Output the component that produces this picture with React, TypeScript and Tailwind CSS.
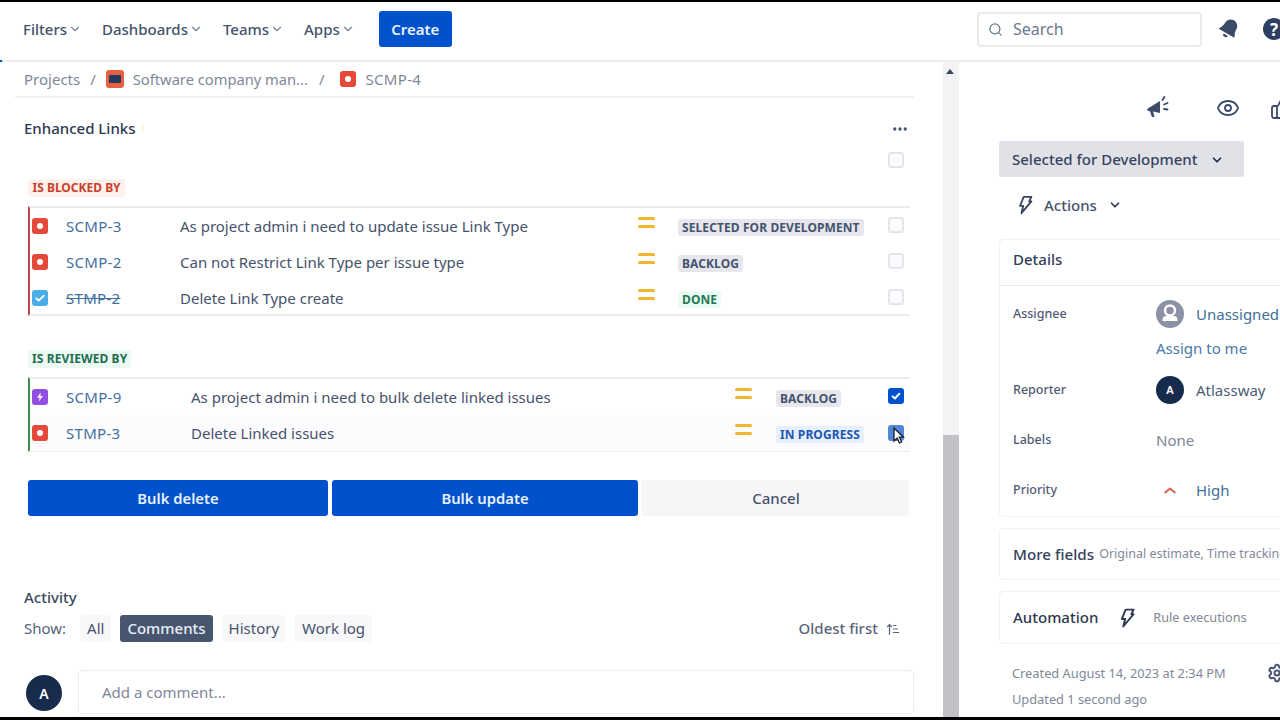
import { ChevronDown, Eye, Search, ThumbsUp, Settings, MoreHorizontal } from "lucide-react";

function Story() {
  return (
    <span className="flex h-4 w-4 items-center justify-center rounded-[3px] bg-[#e5493a]">
      <span className="h-[6px] w-[6px] rounded-full bg-white" />
    </span>
  );
}

function TaskIcon() {
  return (
    <span className="flex h-4 w-4 items-center justify-center rounded-[3px] bg-[#4bade8]">
      <svg viewBox="0 0 16 16" className="h-3 w-3" fill="none" stroke="white" strokeWidth="2.4" strokeLinecap="round" strokeLinejoin="round"><path d="M3 8.5l3.2 3L13 5" /></svg>
    </span>
  );
}

function EpicIcon() {
  return (
    <span className="flex h-4 w-4 items-center justify-center rounded-[3px] bg-[#904ee2]">
      <svg viewBox="0 0 16 16" className="h-3 w-3" fill="white"><path d="M9 2L4 9h3.4L6.6 14 12 6.8H8.4z" /></svg>
    </span>
  );
}

function Bolt({ className }: { className: string }) {
  return (
    <svg viewBox="0 0 16 22" className={className} fill="none" stroke="currentColor" strokeWidth="2" strokeLinejoin="round">
      <path d="M6 2h8.500l-2.500 5h2.500L3.500 20l2-8H2z" />
    </svg>
  );
}

function Check({ on, soft }: { on?: boolean; soft?: boolean }) {
  if (soft) return <span className="block h-4 w-4 rounded-[3px] bg-[#4f86d9]" />;
  return on ? (
    <span className="flex h-4 w-4 items-center justify-center rounded-[3px] bg-[#0052cc]">
      <svg viewBox="0 0 16 16" className="h-3 w-3" fill="none" stroke="white" strokeWidth="2.6" strokeLinecap="round" strokeLinejoin="round"><path d="M3.5 8.5l3 2.8L12.5 5" /></svg>
    </span>
  ) : (
    <span className="block h-4 w-4 rounded-[3px] border-2 border-[#e4e5ea] bg-[#fafbfc]" />
  );
}

function Priority() {
  return (
    <span className="-mt-[7px] flex w-[17px] flex-col gap-[5px]">
      <span className="h-[3px] rounded-full bg-[#f3b42f]" />
      <span className="h-[3px] rounded-full bg-[#f3b42f]" />
    </span>
  );
}

function Lozenge({ text, cls }: { text: string; cls: string }) {
  return <span className={`rounded-[3px] px-1 text-[12px] font-bold leading-[18px] tracking-[0.1px] ${cls}`}>{text}</span>;
}

const GREY = "bg-[#e6e6ec] text-[#44546f]";

function Row({ cols, icon, id, done, summary, status, cls, on, soft, hover, children }: {
  cols: string; icon: React.ReactNode; id: string; done?: boolean; summary: string; status: string; cls: string; on?: boolean; soft?: boolean; hover?: boolean; children?: React.ReactNode;
}) {
  return (
    <div className={`relative grid h-9 items-center ${cols} ${hover ? "bg-[#fcfbfe]" : ""}`}>
      <span className="pl-[2px]">{icon}</span>
      <span className={`text-[15px] tracking-[0.3px] text-[#44709f] ${done ? "line-through" : ""}`}>{id}</span>
      <span className="whitespace-nowrap text-[15px] text-[#46526c]">{summary}</span>
      <Priority />
      <span className="justify-self-start"><Lozenge text={status} cls={cls} /></span>
      <span className={soft ? "" : "-mt-[2px]"}><Check on={on} soft={soft} /></span>
      {children}
    </div>
  );
}

function NavItem({ label, className = "" }: { label: string; className?: string }) {
  return (
    <span className={`flex items-center gap-[1px] text-[15px] font-medium text-[#44526c] ${className}`}>
      {label}
      <ChevronDown className="h-[14px] w-[14px] text-[#7a8499]" strokeWidth={2} />
    </span>
  );
}

function DetailRow({ label, children, className = "" }: { label: string; children: React.ReactNode; className?: string }) {
  return (
    <div className={`flex items-center ${className}`}>
      <span className="w-[143px] text-[12.5px] font-medium text-[#4f5b73]">{label}</span>
      {children}
    </div>
  );
}

function Tab({ label, on }: { label: string; on?: boolean }) {
  return (
    <span className={`flex h-[27px] items-center rounded-[3px] px-[7px] text-[15px] ${on ? "bg-[#47556f] font-medium text-[#e9eef7]" : "bg-[#f8f8fb] text-[#46526c]"}`}>{label}</span>
  );
}

export default function App() {
  return (
    <div className="flex h-[720px] w-[1280px] flex-col overflow-hidden bg-white font-['Noto_Sans','Open_Sans',sans-serif]">
      <div className="h-[2px] shrink-0 bg-black" />

      <header className="relative flex h-[60px] shrink-0 items-center border-b-2 border-[#ebecf2] pb-[4px] pl-[23px]">
        <NavItem label="Filters" className="mr-[20px]" />
        <NavItem label="Dashboards" className="mr-[20px]" />
        <NavItem label="Teams" className="mr-[20px]" />
        <NavItem label="Apps" className="mr-[24px]" />
        <span className="flex h-9 w-[73px] items-center justify-center rounded-[3px] bg-[#0052cc] text-[15px] font-semibold text-[#e8f0fb]">Create</span>
        <div className="-mr-[5px] ml-auto flex items-center">
          <div className="flex h-[35px] w-[225px] items-center gap-[10px] rounded-[4px] border-2 border-[#e9eaee] pl-[9px] text-[16px] text-[#6b778c]">
            <Search className="h-[15px] w-[15px] text-[#6b778c]" strokeWidth={2} />
            Search
          </div>
          <svg viewBox="0 0 24 24" className="ml-[15px] h-[24px] w-[24px] rotate-[30deg] fill-[#3a4a68]">
            <path d="M12 2a6.500 6.500 0 0 0-6.500 6.500c0 5-2.500 7-2.500 8.500h18c0-1.500-2.500-3.500-2.500-8.500A6.500 6.500 0 0 0 12 2zM9.500 18.500a2.500 2.500 0 0 0 5 0z" />
          </svg>
          <span className="ml-[22px] flex h-[22px] w-[22px] shrink-0 items-center justify-center rounded-full bg-[#2e3f63] text-[17px] font-bold leading-none text-white">?</span>
        </div>
        <span className="absolute -bottom-[2px] left-0 h-[2px] w-[2px] bg-[#0052cc]" />
      </header>

      <main className="flex min-h-0 flex-1">
        <section className="w-[943px] shrink-0 overflow-hidden">
          <div className="ml-[15px] flex h-[36px] w-[899px] items-center border-b-2 border-[#f0f1f4] pl-[9px] text-[15px] text-[#7f8899]">
            <span>Projects</span>
            <span className="mx-[10px]">/</span>
            <span className="mr-[9px] flex h-[18px] w-[18px] items-center justify-center rounded-[3px] bg-[#e8603f]">
              <span className="h-[8px] w-[12px] rounded-[1px] bg-[#223a5e]" />
            </span>
            <span className="text-[14.7px]">Software company man...</span>
            <span className="ml-[11px] mr-[15px]">/</span>
            <span className="mr-[10px]"><Story /></span>
            <span className="tracking-[0.3px]">SCMP-4</span>
          </div>

          <div className="ml-[24px] flex h-[60px] w-[885px] items-center justify-between pt-[1px]">
            <span className="flex items-center text-[15px] font-medium text-[#2d3850]">
              Enhanced Links
              <span className="ml-[7px] h-[7px] w-[2px] bg-[#fdf3d8]" />
            </span>
            <MoreHorizontal className="h-[18px] w-[18px] text-[#44526c]" strokeWidth={2.5} />
          </div>

          <div className="ml-[888px] -mt-[6px] h-4 w-4"><Check /></div>

          <div className="ml-[28px] mt-[7px] flex h-[26px] items-center">
            <span className="rounded-[3px] bg-[#fdf0ed] py-0 pl-[4.5px] pr-1 text-[12px] font-bold leading-[18px] text-[#c9412a]">IS BLOCKED BY</span>
          </div>

          <div className="ml-[28px] mt-[5px] h-[110px] w-[882px] border-y-2 border-l-2 border-y-[#ebecf0] border-l-[#c0434a]">
            <Row cols="grid-cols-[36px_114px_458px_40px_210px_16px]" icon={<Story />} id="SCMP-3" summary="As project admin i need to update issue Link Type" status="SELECTED FOR DEVELOPMENT" cls={GREY} />
            <Row cols="grid-cols-[36px_114px_458px_40px_210px_16px]" icon={<Story />} id="SCMP-2" summary="Can not Restrict Link Type per issue type" status="BACKLOG" cls={GREY} />
            <Row cols="grid-cols-[36px_114px_458px_40px_210px_16px]" icon={<TaskIcon />} id="STMP-2" done summary="Delete Link Type create" status="DONE" cls="bg-[#eafbf3] text-[#1f7a55]" />
          </div>

          <div className="ml-[28px] mt-[30px] flex h-[26px] items-center">
            <span className="rounded-[3px] bg-[#ecf9f3] px-1 text-[12px] font-bold leading-[18px] tracking-[0.1px] text-[#1c6f50]">IS REVIEWED BY</span>
          </div>

          <div className="ml-[28px] mt-[5px] h-[75px] w-[882px] border-y-2 border-l-2 border-y-[#ebecf0] border-l-[#3f8a4c]">
            <Row cols="grid-cols-[36px_125px_544px_41px_112px_16px]" icon={<EpicIcon />} id="SCMP-9" summary="As project admin i need to bulk delete linked issues" status="BACKLOG" cls={GREY} on />
            <Row cols="grid-cols-[36px_125px_544px_41px_112px_16px]" icon={<Story />} id="STMP-3" summary="Delete Linked issues" status="IN PROGRESS" cls="bg-[#e6f0fd] text-[#1f56b3]" soft hover>
              <svg viewBox="0 0 12 18" className="absolute left-[863px] top-[12px] h-[18px] w-3">
                <path d="M1 1v13l3.200-3 2.200 5 2.200-1-2.200-4.800H10.500z" fill="#fff" stroke="#1c1c22" strokeWidth="1.300" />
              </svg>
            </Row>
          </div>

          <div className="ml-[28px] mt-[28px] flex w-[881px] gap-[4px]">
            <span className="flex h-9 w-[300px] items-center justify-center rounded-[3px] bg-[#0052cc] text-[14.8px] font-semibold text-[#e8f0fb]">Bulk delete</span>
            <span className="flex h-9 w-[306px] items-center justify-center rounded-[3px] bg-[#0052cc] text-[14.8px] font-semibold text-[#e8f0fb]">Bulk update</span>
            <span className="ml-[-1px] flex h-9 flex-1 items-center justify-center rounded-[3px] bg-[#f6f6f9] pl-[2px] text-[15px] font-medium text-[#46526c]">Cancel</span>
          </div>

          <div className="ml-[24px] mt-[70px] text-[15px] font-medium leading-[22px] text-[#3a4660]">Activity</div>

          <div className="ml-[24px] mt-[7px] flex w-[876px] items-center">
            <span className="mr-[14px] text-[15px] text-[#57637a]">Show:</span>
            <div className="flex gap-[9px]">
              <Tab label="All" />
              <Tab label="Comments" on />
              <Tab label="History" />
              <Tab label="Work log" />
            </div>
            <span className="ml-auto flex items-center gap-[8px] text-[15px] font-medium text-[#5a6579]">
              Oldest first
              <svg viewBox="0 0 16 16" className="h-[14px] w-[14px]" fill="none" stroke="#5a6579" strokeWidth="1.400" strokeLinecap="round">
                <path d="M4 14V3M1.800 5.200L4 3l2.200 2.200M8.500 4h3M8.500 8h4.500M8.500 12h6" />
              </svg>
            </span>
          </div>

          <div className="ml-[26px] mt-[28px] flex items-start">
            <span className="mt-[5px] flex h-9 w-9 shrink-0 items-center justify-center rounded-full bg-[#172b4d] text-[14px] font-semibold text-white">A</span>
            <div className="ml-[16px] flex h-[44px] w-[836px] items-center rounded-[3px] border border-[#eeeff2] pl-[23px] text-[15px] text-[#7f8899]">Add a comment...</div>
          </div>
        </section>

        <div className="relative w-[16px] shrink-0 bg-[#f3f3f6]">
          <span className="absolute left-[3px] top-[7px] h-0 w-0 border-x-[4px] border-b-[5px] border-x-transparent border-b-[#3a4660]" />
          <span className="absolute inset-x-0 top-[373px] h-[282px] bg-[#c2c1c6]" />
        </div>

        <aside className="min-w-0 flex-1 overflow-hidden pl-[40px]">
          <div className="flex h-[79px] w-[300px] items-center pl-[146px] pt-[12px] text-[#3a4a68]">
            <svg viewBox="0 0 24 24" className="h-[24px] w-[24px] shrink-0 fill-[#3a4a68]">
              <path d="M2 13l13-8v12l-7-1.500 1.500 5-2.500.700L5 15.200 3 15z" />
              <path d="M17.500 4l2-3M19 8.500l3.500-1.500M19 13l3.500 .500" fill="none" stroke="#3a4a68" strokeWidth="1.800" strokeLinecap="round" />
            </svg>
            <Eye className="ml-[47px] h-[24px] w-[24px] shrink-0" strokeWidth={1.800} />
            <ThumbsUp className="ml-[30px] h-[24px] w-[24px] shrink-0" strokeWidth={1.800} />
          </div>

          <div className="flex h-9 w-[245px] items-center rounded-[3px] bg-[#e1e2e8] pl-[13px] pt-[1px] text-[15px] font-medium text-[#36435e]">
            Selected for Development
            <ChevronDown className="ml-[13px] h-[14px] w-[14px] text-[#1f2c47]" strokeWidth={3} />
          </div>

          <div className="mt-[10px] flex h-[36px] items-center pl-[19px] text-[15px] font-medium text-[#46526c]">
            <Bolt className="h-[20px] w-[15px] text-[#3a4660]" />
            <span className="ml-[11px]">Actions</span>
            <ChevronDown className="ml-[11px] h-[14px] w-[14px] text-[#2d3850]" strokeWidth={3} />
          </div>

          <div className="mt-[16px] w-[400px] rounded-[4px] border border-[#f0f1f4]">
            <div className="flex h-[46px] items-center border-b border-[#ebecf0] pb-[6px] pl-[13px] text-[15px] font-medium text-[#34405a]">Details</div>
            <div className="pl-[13px]">
              <DetailRow label="Assignee" className="mt-[10px] h-9">
                <svg viewBox="0 0 28 28" className="h-[28px] w-[28px] shrink-0">
                  <circle cx="14" cy="14" r="14" fill="#8c91a5" />
                  <circle cx="14" cy="10.500" r="5" fill="none" stroke="#fff" strokeWidth="2.400" />
                  <path d="M6.500 19.500c0-2.500 2-3.500 4-3.500h7c2 0 4 1 4 3.500v1.500h-15z" fill="#fff" />
                </svg>
                <span className="ml-[12px] whitespace-nowrap text-[15px] text-[#3f6f96]">Unassigned</span>
              </DetailRow>
              <div className="ml-[143px] mt-[6px] text-[15px] leading-[20px] text-[#4a78a8]">Assign to me</div>
              <DetailRow label="Reporter" className="mt-[14px] h-9">
                <span className="flex h-[28px] w-[28px] shrink-0 items-center justify-center rounded-full bg-[#172b4d] text-[11px] font-semibold text-white">A</span>
                <span className="ml-[12px] text-[15px] text-[#4b5e76]">Atlassway</span>
              </DetailRow>
              <DetailRow label="Labels" className="mt-[14px] h-9">
                <span className="text-[15px] text-[#7c8597]">None</span>
              </DetailRow>
              <DetailRow label="Priority" className="mt-[14px] h-9">
                <span className="flex w-[28px] justify-center">
                  <svg viewBox="0 0 16 10" className="h-[8px] w-[14px]" fill="none" stroke="#d9604a" strokeWidth="2.400" strokeLinecap="round" strokeLinejoin="round"><path d="M2 8l6-5 6 5" /></svg>
                </span>
                <span className="ml-[12px] text-[15px] text-[#3f6f96]">High</span>
              </DetailRow>
            </div>
            <div className="h-[8px]" />
          </div>

          <div className="mt-[11px] flex h-[52px] w-[400px] items-center gap-[5px] rounded-[4px] border border-[#f0f1f4] pl-[13px]">
            <span className="text-[15.2px] font-medium text-[#34405a]">More fields</span>
            <span className="whitespace-nowrap text-[12.5px] text-[#7f8899]">Original estimate, Time tracking</span>
          </div>

          <div className="mt-[11px] flex h-[53px] w-[400px] items-center rounded-[4px] border border-[#f0f1f4] pl-[13px]">
            <span className="text-[15px] font-medium text-[#2d3850]">Automation</span>
            <Bolt className="ml-[22px] h-[22px] w-[15px] text-[#2d3850]" />
            <span className="ml-[18px] text-[12.7px] text-[#7f8899]">Rule executions</span>
          </div>

          <div className="relative mt-[17px] pl-[13px] text-[12.8px] text-[#7f8899]">
            <div className="leading-[24px]">Created August 14, 2023 at 2:34 PM</div>
            <div className="mt-[2px] leading-[24px]">Updated 1 second ago</div>
            <Settings className="absolute left-[268px] top-[2px] h-[20px] w-[20px] text-[#4f5b73]" strokeWidth={2.500} />
          </div>
        </aside>
      </main>

      <div className="h-[3px] shrink-0 bg-black" />
    </div>
  );
}
